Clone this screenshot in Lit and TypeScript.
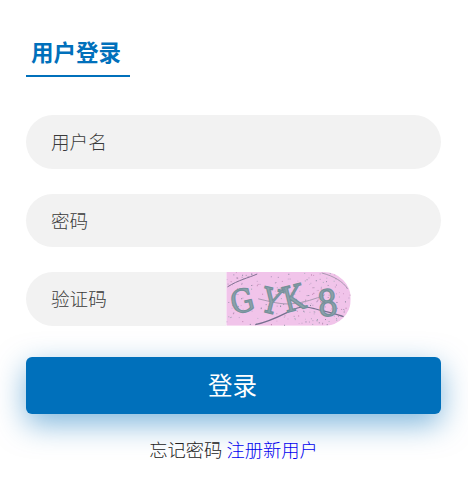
import { LitElement, html, css, svg } from "lit";
import { customElement } from "lit/decorators.js";

function noise() {
  let s = 7;
  const r = () => ((s = (s * 16807) % 2147483647) / 2147483647);
  const cols = ["#5a6a80", "#8a7aa0", "#3f5a66", "#a06090", "#7fa0a0"];
  const out = [];
  for (let i = 0; i < 230; i++) {
    out.push(svg`<rect x=${(r() * 125).toFixed(1)} y=${(r() * 54).toFixed(1)} width="1" height="1" fill=${cols[Math.floor(r() * 5)]} opacity=${(0.25 + r() * 0.5).toFixed(2)}></rect>`);
  }
  return out;
}

@customElement("app-root")
export class AppRoot extends LitElement {
  static styles = css`
    :host {
      display: block;
      width: 468px;
      height: 487px;
      background: #fff;
      font-family: "Noto Sans CJK SC", "Liberation Sans", sans-serif;
      overflow: hidden;
    }
    .wrap {
      padding: 36px 27px 0 26px;
      display: flex;
      flex-direction: column;
    }
    .tabs {
      display: flex;
      margin-bottom: 38px;
    }
    .tab {
      width: 104px;
      height: 41px;
      box-sizing: border-box;
      padding-left: 5px;
      border-bottom: 2px solid #0070bb;
      color: #0070bb;
      font-size: 22.5px;
      font-weight: 700;
      line-height: 30px;
      white-space: nowrap;
    }
    .field {
      height: 53.6px;
      border-radius: 27px;
      background: #f2f2f2;
      color: #3a3a3a;
      font-size: 18.6px;
      font-weight: 300;
      line-height: 52px;
      padding-left: 25px;
      box-sizing: border-box;
      margin-bottom: 25px;
    }
    .code-row {
      display: flex;
      height: 53.6px;
      margin-bottom: 31px;
    }
    .code-row .field {
      width: 200px;
      border-radius: 27px 0 0 27px;
      margin: 0;
    }
    .captcha {
      display: block;
      width: 125px;
      height: 53.6px;
      border-radius: 0 27px 27px 0;
    }
    .btn {
      height: 57px;
      border-radius: 6px;
      background: #0070bb;
      color: #fff;
      font-size: 24.5px;
      line-height: 56px;
      text-align: center;
      padding-right: 2px;
      box-shadow: 0 10px 30px rgba(0, 112, 187, 0.5);
    }
    .links {
      margin-top: 22px;
      text-align: center;
      color: #222;
      font-size: 18.3px;
      font-weight: 300;
      line-height: 26px;
    }
    .links a {
      color: #0000ee;
      text-decoration: none;
    }
    .captcha text {
      font-family: "DejaVu Serif", "Liberation Serif", serif;
      font-size: 28px;
      fill: #8aa2aa;
      stroke: #75909a;
      stroke-width: 1;
    }
  `;

  render() {
    return html`<div class="wrap">
      <div class="tabs"><div class="tab">用户登录</div></div>
      <div class="field">用户名</div>
      <div class="field">密码</div>
      <div class="code-row">
        <div class="field">验证码</div>
        <svg class="captcha" viewBox="0 0 125 54">
          <rect width="125" height="54" fill="#f1c4ea"></rect>
          ${noise()}
          <path d="M1 15 C12 8 22 6 31 2" fill="none" stroke="#7d6f8f" stroke-width="1"></path>
          <path d="M29 53 C45 50 58 42 69 37 C78 34 85 36 89 37 C100 40 110 42 118 45" fill="none" stroke="#76708f" stroke-width="1.2"></path>
          <path d="M32 27 C45 30 55 33 66 32 C78 31 90 27 99 23" fill="none" stroke="#a898b0" stroke-width="1"></path>
          <path d="M96 1 C108 4 118 10 122 17" fill="none" stroke="#a898b0" stroke-width="1"></path>
          <text transform="translate(7 43) rotate(-14) scale(1.05 1.15)">G</text>
          <text transform="translate(33 39) rotate(14) scale(1.05 1.25)">Y</text>
          <text transform="translate(60 41) rotate(-14) scale(1.05 1.25)">K</text>
          <text transform="translate(93 45) rotate(-6) scale(1.15 1.3)">8</text>
        </svg>
      </div>
      <div class="btn">登录</div>
      <div class="links">忘记密码 <a href="#">注册新用户</a></div>
    </div>`;
  }
}
